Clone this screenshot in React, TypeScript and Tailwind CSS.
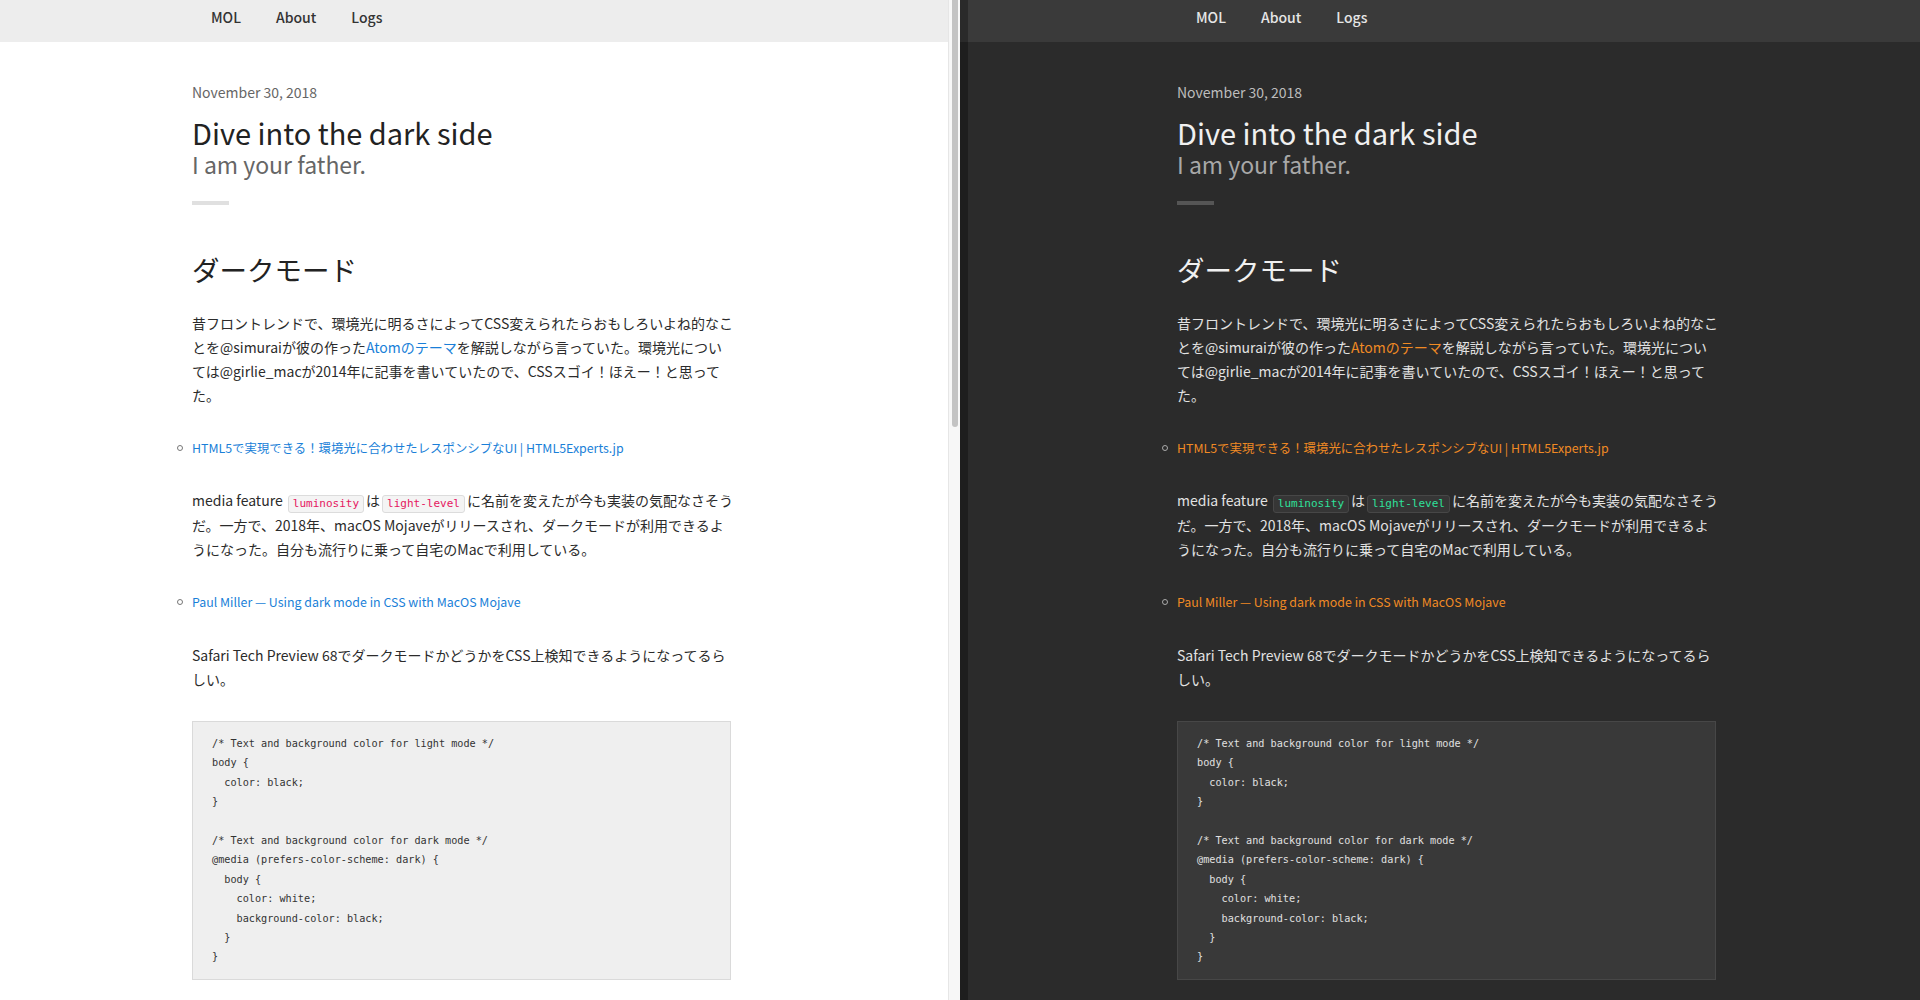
const themes = {
  light: {
    page: "bg-white",
    header: "bg-[#ededed]",
    nav: "text-[#333]",
    date: "text-[#666]",
    title: "text-[#222]",
    sub: "text-[#666]",
    rule: "bg-[#e0e0e0]",
    text: "text-[#2b2b2b]",
    link: "text-[#1a7fd8]",
    bullet: "border-[#777]",
    code: "bg-[#f4f4f4] border-[#dcdcdc] text-[#e5175f]",
    pre: "bg-[#efefef] border-[#dadada] text-[#333]"
  },
  dark: {
    page: "bg-[#2b2b2b]",
    header: "bg-[#3a3a3a]",
    nav: "text-[#e6e6e6]",
    date: "text-[#bdbdbd]",
    title: "text-[#f0f0f0]",
    sub: "text-[#a8a8a8]",
    rule: "bg-[#555]",
    text: "text-[#e2e2e2]",
    link: "text-[#f08a24]",
    bullet: "border-[#aaa]",
    code: "bg-[#363636] border-[#474747] text-[#2fe09a]",
    pre: "bg-[#393939] border-[#474747] text-[#e0e0e0]"
  }
};

const codeSample = `/* Text and background color for light mode */
body {
  color: black;
}

/* Text and background color for dark mode */
@media (prefers-color-scheme: dark) {
  body {
    color: white;
    background-color: black;
  }
}`;

const Code = ({ children, cls }: { children: string; cls: string }) => (
  <code
    className={`${cls} mx-[2px] inline-block rounded-[3px] border px-[4px] align-[-1px] font-['DejaVu_Sans_Mono',monospace] text-[11px] leading-[16px]`}
  >
    {children}
  </code>
);

const LinkItem = ({
  label,
  link,
  bullet
}: {
  label: string;
  link: string;
  bullet: string;
}) => (
  <ul className="mt-[31px] text-[12.4px] leading-[20px]">
    <li className="-ml-[15px] flex items-center gap-[9px]">
      <span className={`h-[6px] w-[6px] rounded-full border ${bullet}`} />
      <a className={link}>{label}</a>
    </li>
  </ul>
);

function Post({ mode, indent, width }: { mode: "light" | "dark"; indent: string; width: string }) {
  const t = themes[mode];
  const para = `text-[14px] leading-[24px] whitespace-nowrap ${t.text}`;
  return (
    <div className={`${width} ${t.page} flex h-full flex-col`}>
      <header className={`h-[42px] shrink-0 ${t.header} ${indent}`}>
        <nav className={`flex gap-[35px] pl-[19px] pt-[8px] text-[14px] font-medium leading-[18px] ${t.nav}`}>
          <span>MOL</span>
          <span>About</span>
          <span>Logs</span>
        </nav>
      </header>

      <main className={indent}>
        <article className="w-[539px]">
          <div className={`mt-[40px] text-[14px] leading-[20px] ${t.date}`}>November 30, 2018</div>
          <h1 className={`mt-[13px] text-[29px] leading-[34px] ${t.title}`}>Dive into the dark side</h1>
          <div className={`mt-[2px] text-[23px] leading-[26px] ${t.sub}`}>I am your father.</div>
          <div className={`mt-[24px] h-[4px] w-[37px] ${t.rule}`} />

          <h2 className={`mt-[46px] text-[27.5px] leading-[36px] ${t.title}`}>ダークモード</h2>

          <p className={`mt-[24px] ${para}`}>
            昔フロントレンドで、環境光に明るさによってCSS変えられたらおもしろいよね的なこ
            <br />
            とを@simuraiが彼の作った<a className={t.link}>Atomのテーマ</a>を解説しながら言っていた。環境光につい
            <br />
            ては@girlie_macが2014年に記事を書いていたので、CSSスゴイ！ほえー！と思って
            <br />
            た。
          </p>

          <LinkItem
            label="HTML5で実現できる！環境光に合わせたレスポンシブなUI | HTML5Experts.jp"
            link={t.link}
            bullet={t.bullet}
          />

          <p className={`mt-[30px] ${para}`}>
            media feature <Code cls={t.code}>luminosity</Code>は<Code cls={t.code}>light-level</Code>
            に名前を変えたが今も実装の気配なさそう
            <br />
            だ。一方で、2018年、macOS Mojaveがリリースされ、ダークモードが利用できるよ
            <br />
            うになった。自分も流行りに乗って自宅のMacで利用している。
          </p>

          <LinkItem
            label="Paul Miller — Using dark mode in CSS with MacOS Mojave"
            link={t.link}
            bullet={t.bullet}
          />

          <p className={`mt-[31px] ${para}`}>
            Safari Tech Preview 68でダークモードかどうかをCSS上検知できるようになってるら
            <br />
            しい。
          </p>

          <pre
            className={`mt-[30px] border px-[19px] py-[12px] font-['DejaVu_Sans_Mono',monospace] text-[10.2px] leading-[19.4px] ${t.pre}`}
          >
            {codeSample}
          </pre>
        </article>
      </main>
    </div>
  );
}

export default function App() {
  return (
    <div className="flex h-[1000px] w-[1920px] overflow-hidden font-['Noto_Sans_CJK_JP','Noto_Sans',sans-serif]">
      <Post mode="light" indent="pl-[192px]" width="w-[948px]" />

      {/* scrollbar of the light window */}
      <div className="flex w-[12px] shrink-0 border-l border-[#e6e6e6] bg-[#f7f7f7] pl-[3px]">
        <div className="h-[427px] w-[6px] rounded-b-full bg-[#c3c3c3]" />
      </div>

      <div className="flex w-[8px] shrink-0 flex-col">
        <div className="h-[42px] bg-[#2a2a2a]" />
        <div className="flex-1 bg-[#1e1e1e]" />
      </div>

      <Post mode="dark" indent="pl-[209px]" width="flex-1" />
    </div>
  );
}
